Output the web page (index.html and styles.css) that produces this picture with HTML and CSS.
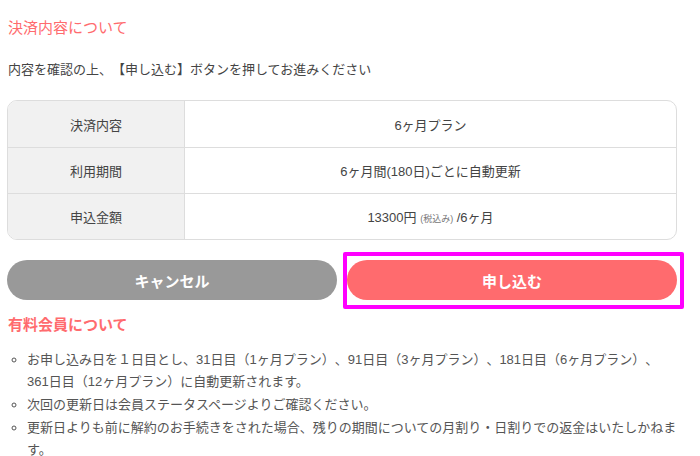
FILE: index.html
```html
<!DOCTYPE html>
<html lang="ja">
<head>
  <meta charset="UTF-8">
  <meta name="viewport" content="width=device-width, initial-scale=1.0">
  <title>決済内容の確認</title>
  <link rel="stylesheet" href="styles.css">
</head>
<body>
  <main class="confirm">
    <h2 class="section-title">決済内容について</h2>
    <p class="lead">内容を確認の上、【申し込む】ボタンを押してお進みください</p>

    <div class="detail-box">
      <table class="detail-table">
        <tr>
          <th>決済内容</th>
          <td>6ヶ月プラン</td>
        </tr>
        <tr>
          <th>利用期間</th>
          <td>6ヶ月間(180日)ごとに自動更新</td>
        </tr>
        <tr>
          <th>申込金額</th>
          <td>13300円 <small>(税込み)</small> /6ヶ月</td>
        </tr>
      </table>
    </div>

    <div class="actions">
      <button class="btn btn-cancel">キャンセル</button>
      <button class="btn btn-submit">申し込む</button>
    </div>

    <h3 class="member-title">有料会員について</h3>
    <ul class="notes">
      <li>お申し込み日を１日目とし、31日目（1ヶ月プラン）、91日目（3ヶ月プラン）、181日目（6ヶ月プラン）、361日目（12ヶ月プラン）に自動更新されます。</li>
      <li>次回の更新日は会員ステータスページよりご確認ください。</li>
      <li>更新日よりも前に解約のお手続きをされた場合、残りの期間についての月割り・日割りでの返金はいたしかねます。</li>
    </ul>
  </main>
</body>
</html>
```

FILE: styles.css
```css
body {
  margin: 0;
  font-family: "Liberation Sans", "Noto Sans CJK JP", sans-serif;
  color: #444;
  background: #fff;
  text-spacing-trim: space-all;
}

.confirm {
  width: 670px;
  margin-left: 7px;
}

.section-title {
  margin: 0;
  padding-top: 17px;
  padding-left: 1px;
  font-size: 15px;
  font-weight: normal;
  line-height: 22px;
  color: #ff6b6e;
}

.lead {
  margin: 20px 0 0;
  padding-left: 1px;
  font-size: 13px;
  line-height: 22px;
}

.detail-box {
  margin-top: 19px;
  border: 1px solid #ddd;
  border-radius: 10px;
  overflow: hidden;
}

.detail-table {
  width: 100%;
  border-collapse: collapse;
  font-size: 13px;
}

.detail-table th,
.detail-table td {
  height: 45px;
  padding: 0;
  text-align: center;
  vertical-align: middle;
  border-top: 1px solid #ddd;
}

.detail-table tr:first-child th,
.detail-table tr:first-child td {
  height: 46px;
  border-top: none;
}

.detail-table th {
  width: 176px;
  font-weight: normal;
  background: #f1f1f1;
  border-right: 1px solid #ddd;
}

.detail-table small {
  font-size: 9px;
  color: #777;
}

.actions {
  display: flex;
  gap: 10px;
  margin-top: 20px;
}

.btn {
  flex: 1;
  height: 40px;
  border: none;
  border-radius: 20px;
  font-family: inherit;
  font-size: 15px;
  font-weight: bold;
  color: #fff;
  cursor: pointer;
}

.btn-cancel {
  background: #999;
}

.btn-submit {
  position: relative;
  background: #ff6b6e;
}

/* highlight frame around the submit button */
.btn-submit::after {
  content: "";
  position: absolute;
  top: -8px;
  left: -4px;
  right: -7px;
  bottom: -9px;
  border: 4px solid #ff00ff;
  border-radius: 2px;
}

.member-title {
  margin: 14px 0 0;
  padding-left: 1px;
  font-size: 15px;
  line-height: 22px;
  color: #ff6b6e;
}

.notes {
  margin: 13px 0 0;
  padding-left: 20px;
  list-style: circle;
  font-size: 13px;
  line-height: 22px;
  color: #555;
}

.notes li {
  margin-bottom: 1px;
}
```
